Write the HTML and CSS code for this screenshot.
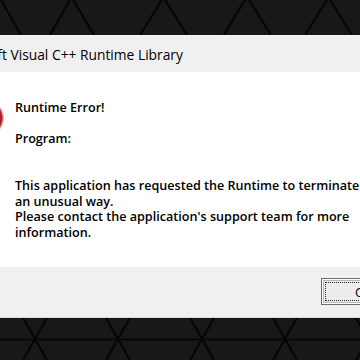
FILE: index.html
```html
<!DOCTYPE html>
<html>
<head>
<meta charset="utf-8">
<link rel="stylesheet" href="styles.css">
</head>
<body>
<div class="band band-top">
  <svg width="360" height="35" viewBox="0 0 360 35">
    <g class="tri">
      <line x1="1" y1="0" x2="21" y2="35"/>
      <line x1="71" y1="-2" x2="50" y2="35"/>
      <line x1="72" y1="-2" x2="94" y2="35"/>
      <line x1="163" y1="-2" x2="140" y2="35"/>
      <line x1="164" y1="-2" x2="187" y2="35"/>
      <line x1="246" y1="-2" x2="224" y2="35"/>
      <line x1="248" y1="-2" x2="271" y2="35"/>
      <line x1="328" y1="-2" x2="305" y2="35"/>
      <line x1="329" y1="-2" x2="352" y2="35"/>
    </g>
  </svg>
</div>
<div class="dialog">
  <div class="titlebar"><span class="title">Microsoft Visual C++ Runtime Library</span></div>
  <div class="content">
    <div class="icon">
      <svg width="38" height="38" viewBox="0 0 38 38">
        <defs>
          <radialGradient id="rg" cx="45%" cy="40%" r="60%">
            <stop offset="0" stop-color="#f06a6a"/>
            <stop offset="0.7" stop-color="#d3232b"/>
            <stop offset="1" stop-color="#a8141c"/>
          </radialGradient>
        </defs>
        <circle cx="19" cy="19" r="18" fill="#c9b6b6"/>
        <circle cx="19" cy="19" r="16.5" fill="url(#rg)"/>
        <path d="M12 12 L26 26 M26 12 L12 26" stroke="#fff" stroke-width="4"/>
      </svg>
    </div>
    <div class="messages">
      <p class="line">Runtime Error!</p>
      <p class="line gap1">Program:</p>
      <p class="line gap2">This application has requested the Runtime to terminate it in</p>
      <p class="line">an unusual way.</p>
      <p class="line">Please contact the application's support team for more</p>
      <p class="line">information.</p>
    </div>
  </div>
  <div class="footer">
    <button class="ok"><span class="focus">OK</span></button>
  </div>
</div>
<div class="band band-bottom">
  <svg width="360" height="42" viewBox="0 0 360 42">
    <g class="tri">
      <line x1="0" y1="21.5" x2="360" y2="21.5"/>
      <line x1="23" y1="0" x2="47" y2="42"/>
      <line x1="47" y1="0" x2="23" y2="42"/>
      <line x1="106" y1="0" x2="130" y2="42"/>
      <line x1="130" y1="0" x2="106" y2="42"/>
      <line x1="190" y1="0" x2="214" y2="42"/>
      <line x1="214" y1="0" x2="190" y2="42"/>
      <line x1="273" y1="0" x2="297" y2="42"/>
      <line x1="297" y1="0" x2="273" y2="42"/>
      <line x1="356" y1="0" x2="380" y2="42"/>
      <line x1="380" y1="0" x2="356" y2="42"/>
    </g>
  </svg>
</div>
</body>
</html>
```
FILE: styles.css
```css
html, body {
  margin: 0;
  padding: 0;
  width: 360px;
  height: 360px;
  overflow: hidden;
  background: #181818;
}
body {
  font-family: "Open Sans", "Noto Sans", sans-serif;
  color: #000;
}
.band {
  display: block;
  background: #181818;
}
.band svg {
  display: block;
}
.band-top {
  height: 35px;
}
.band-bottom {
  height: 42px;
}
.tri line {
  stroke: #060606;
  stroke-width: 2.2;
}
.dialog {
  width: 480px;
  margin-left: -60px;
  background: #fff;
}
.titlebar {
  height: 36px;
  border-top: 1px solid #f7f7f7;
  background: #f0f0f0;
  display: flex;
  align-items: center;
  padding-left: 6px;
}
.title {
  font-size: 13.8px;
  font-weight: 400;
  color: #000;
  white-space: nowrap;
}
.content {
  display: flex;
  align-items: flex-start;
  height: 195px;
  box-sizing: border-box;
  padding: 28px 0 0 27px;
  background: #fff;
}
.icon {
  width: 38px;
  height: 38px;
  margin-top: -1px;
  margin-right: 10px;
  flex: none;
}
.icon svg {
  display: block;
}
.messages {
  display: flex;
  flex-direction: column;
}
.line {
  margin: 0;
  font-size: 12.6px;
  font-weight: 600;
  line-height: 15.6px;
  white-space: nowrap;
}
.gap1 {
  margin-top: 15.6px;
}
.gap2 {
  margin-top: 31.2px;
}
.footer {
  height: 50px;
  background: #f0f0f0;
  border-bottom: 1px solid #dcdcdc;
  box-sizing: content-box;
  display: flex;
  align-items: flex-start;
  padding-left: 381px;
}
.ok {
  margin-top: 11px;
  width: 86px;
  height: 27px;
  padding: 3px;
  display: flex;
  border: 1px solid #6f6f6f;
  background: #ededed;
  box-shadow: inset 0 0 0 1px #fdfdfd, inset 0 0 0 2px #b8b8b8;
  font-family: "Open Sans", "Noto Sans", sans-serif;
  font-size: 13px;
  color: #000;
  box-sizing: border-box;
}
.focus {
  flex: 1;
  display: flex;
  align-items: center;
  justify-content: center;
  border: 1px dotted #222;
}
```
